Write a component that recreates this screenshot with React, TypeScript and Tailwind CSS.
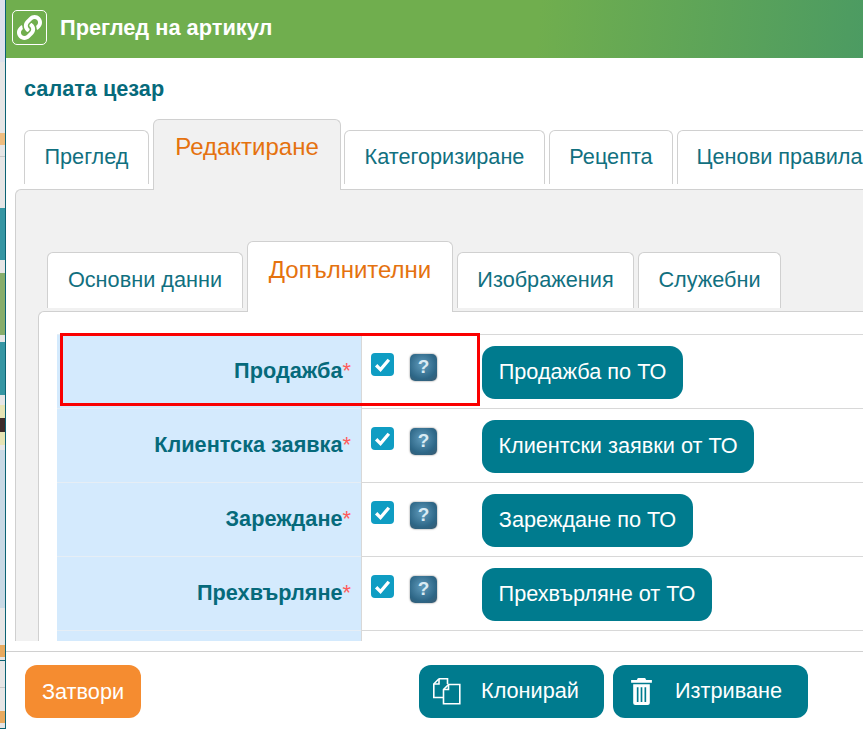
import React from "react";
import { FaLink } from "react-icons/fa";

function OuterTab({ label, w, active }: { label: string; w: string; active?: boolean }) {
  if (active) {
    return (
      <div className={`${w} relative z-10 -mb-[1px] h-[71px] shrink-0 rounded-t-[6px] border border-b-0 border-[#d0d0d0] bg-[#f1f1f1] pt-[9px] text-center text-[24px] text-[#e5720f]`}>
        {label}
      </div>
    );
  }
  return (
    <div className={`${w} mb-[5px] h-[54px] shrink-0 rounded-t-[6px] border border-b-0 border-[#d0d0d0] bg-white pt-[10px] text-center text-[21.7px] text-[#11707f]`}>
      {label}
    </div>
  );
}

function InnerTab({ label, w, active }: { label: string; w: string; active?: boolean }) {
  if (active) {
    return (
      <div className={`${w} relative z-10 -mb-[1px] h-[71px] shrink-0 rounded-t-[6px] border border-b-0 border-[#d0d0d0] bg-white pt-[10px] text-center text-[24px] text-[#e5720f]`}>
        {label}
      </div>
    );
  }
  return (
    <div className={`${w} mb-[3px] h-[56px] shrink-0 rounded-t-[6px] border border-b-0 border-[#d0d0d0] bg-white pt-[11px] text-center text-[21.7px] text-[#11707f]`}>
      {label}
    </div>
  );
}

function HelpIcon() {
  return (
    <div className="flex h-[27px] w-[27px] items-center justify-center rounded-[5px] bg-[radial-gradient(circle_at_45%_40%,#5f9abb,#2d6686_65%,#3c5a6e)] text-[19px] font-bold text-[#d9ebf4] shadow-[0_0_2px_#777]">
      ?
    </div>
  );
}

function Row({ label, btn, btnW, marked }: { label: string; btn: string; btnW: string; marked?: boolean }) {
  return (
    <div className="relative flex h-[74px] shrink-0">
      <div className="flex w-[304px] shrink-0 items-center justify-end border-t border-[#e6eef5] bg-[#d4eafd] pr-[10px] text-[21.7px] font-bold text-[#066a7b]">
        <span>{label}</span>
        <span className="font-normal text-[#ff5a5a]">*</span>
      </div>
      <div className="flex flex-1 border-t border-l border-[#d8d8d8]">
        <div className="flex w-[120px] shrink-0 items-start pl-[9px] pt-[18px]">
          <div className="flex h-[23px] w-[23px] items-center justify-center rounded-[4px] bg-[#0f9dc3]">
            <svg viewBox="0 0 24 24" className="h-[19px] w-[19px]" fill="none" stroke="white" strokeWidth="4.2">
              <path d="M4 13l5.5 5.5L20 6" />
            </svg>
          </div>
          <div className="ml-[16px] mt-[1px]"><HelpIcon /></div>
        </div>
        <div className="pt-[11px]">
          <div className={`flex h-[53px] ${btnW} items-center justify-center rounded-[13px] bg-[#007b8e] text-[21.7px] text-white`}>{btn}</div>
        </div>
      </div>
      {marked && <div className="absolute left-[3px] top-[-1px] h-[73px] w-[420px] border-[3px] border-[#fa0000]" />}
    </div>
  );
}

function CopyIcon() {
  return (
    <svg viewBox="0 0 28 28" className="h-[28px] w-[28px]" fill="none" stroke="white" strokeWidth="1.6">
      <path d="M6 .8H14.5V6M6 .8L.8 6V19.5H10.5" />
      <path d="M6 .8V6H.8" />
      <path d="M15.5 6.5H26.8V25.8H10.5V11.5z" />
      <path d="M15.5 6.5V11.5H10.5" />
    </svg>
  );
}

function TrashIcon() {
  return (
    <svg viewBox="0 0 20 26" className="h-[27px] w-[21px]" fill="white">
      <path d="M6.5 0h7l1 2H20v2.5H0V2h5.5z" />
      <path fillRule="evenodd" d="M2 6h16v18a2 2 0 0 1-2 2H4a2 2 0 0 1-2-2zM5.5 9v14h1.6V9zM9.2 9v14h1.6V9zM12.9 9v14h1.6V9z" />
    </svg>
  );
}

export default function App() {
  return (
    <div className="flex h-[729px] w-[863px] overflow-hidden bg-white [font-family:'Liberation_Sans',Arial,sans-serif]">
      <div className="flex w-[5px] shrink-0 flex-col bg-[#e6e6e6]">
        <div className="h-[62px] bg-[#dde1ec]" />
        <div className="mt-[71px] h-[12px] bg-[#eebd7f]" />
        <div className="mt-[11px] h-[1px] bg-[#c8c8c8]" />
        <div className="mt-[51px] h-[52px] bg-[#3596a3]" />
        <div className="mt-[13px] h-[62px] bg-[#87ad6b]" />
        <div className="mt-[7px] h-[53px] bg-[#3596a3]" />
        <div className="mt-[10px] h-[13px] bg-[#e6e4b4]" />
        <div className="h-[14px] bg-[#3c2b2b]" />
        <div className="h-[13px] bg-[#e6e4b4]" />
        <div className="mt-[5px] h-[158px] bg-[#c8d9e5]" />
        <div className="mt-[37px] h-[12px] bg-[#e8aa5f]" />
        <div className="mt-[3px] h-[1px] bg-[#0b6273]" />
        <div className="mt-[26px] h-[1px] bg-[#c8c8c8]" />
        <div className="mt-[23px] h-[12px] bg-[#e8aa5f]" />
        <div className="mt-[5px] h-[1px] bg-[#0b6273]" />
      </div>
      <div className="flex min-w-0 flex-1 flex-col overflow-hidden border-l border-[#0b6273] bg-white">
        <div className="flex h-[58px] shrink-0 items-center bg-[linear-gradient(95deg,#70ae4e_0%,#70ae4e_62%,#4c9b62_100%)] pb-[4px] pl-[6px]">
          <div className="flex h-[35px] w-[35px] items-center justify-center rounded-[5px] border border-white">
            <FaLink className="h-[25px] w-[25px] text-white" />
          </div>
          <span className="ml-[13px] mt-[2px] text-[21.8px] font-bold text-white">Преглед на артикул</span>
        </div>
        <div className="h-[61px] shrink-0 pl-[18px] pt-[15px] text-[21.7px] font-bold text-[#066a7b]">салата цезар</div>
        <div className="flex h-[70px] shrink-0 items-end pl-[18px]">
          <OuterTab label="Преглед" w="w-[125px]" />
          <div className="ml-[4px]"><OuterTab label="Редактиране" w="w-[188px]" active /></div>
          <div className="ml-[3px]"><OuterTab label="Категоризиране" w="w-[201px]" /></div>
          <div className="ml-[4px]"><OuterTab label="Рецепта" w="w-[124px]" /></div>
          <div className="ml-[4px]"><OuterTab label="Ценови правила" w="w-[205px]" /></div>
        </div>
        <div className="-mr-[30px] ml-[9px] flex min-h-0 flex-1 flex-col overflow-hidden rounded-tl-[6px] border-t border-l border-[#d0d0d0] bg-[#f1f1f1] pt-[51px]">
          <div className="flex h-[70px] shrink-0 items-end pl-[31px]">
            <InnerTab label="Основни данни" w="w-[196px]" />
            <div className="ml-[4px]"><InnerTab label="Допълнителни" w="w-[206px]" active /></div>
            <div className="ml-[4px]"><InnerTab label="Изображения" w="w-[177px]" /></div>
            <div className="ml-[4px]"><InnerTab label="Служебни" w="w-[143px]" /></div>
          </div>
          <div className="ml-[22px] flex min-h-0 flex-1 flex-col overflow-hidden rounded-tl-[6px] border-t border-l border-[#d0d0d0] bg-white pl-[18px] pt-[22px]">
            <Row label="Продажба" btn="Продажба по ТО" btnW="w-[201px]" marked />
            <Row label="Клиентска заявка" btn="Клиентски заявки от ТО" btnW="w-[272px]" />
            <Row label="Зареждане" btn="Зареждане по ТО" btnW="w-[211px]" />
            <Row label="Прехвърляне" btn="Прехвърляне от ТО" btnW="w-[230px]" />
            <div className="flex h-[20px] shrink-0">
              <div className="w-[304px] shrink-0 border-t border-[#e6eef5] bg-[#d4eafd]" />
              <div className="flex-1 border-t border-l border-[#d8d8d8]" />
            </div>
          </div>
        </div>
        <div className="mt-[10px] flex h-[78px] shrink-0 items-start border-t border-[#d0d0d0] pl-[19px] pt-[13px]">
          <div className="flex h-[53px] w-[116px] items-center justify-center rounded-[12px] bg-[#f58c30] pt-[1px] text-[21.7px] text-white">Затвори</div>
          <div className="ml-[278px] flex h-[53px] w-[185px] items-center rounded-[12px] bg-[#007b8e] pl-[14px] text-[21.7px] text-white">
            <CopyIcon />
            <span className="ml-[20px]">Клонирай</span>
          </div>
          <div className="ml-[9px] flex h-[53px] w-[195px] items-center rounded-[12px] bg-[#007b8e] pl-[18px] text-[21.7px] text-white">
            <TrashIcon />
            <span className="ml-[23px]">Изтриване</span>
          </div>
        </div>
      </div>
    </div>
  );
}
